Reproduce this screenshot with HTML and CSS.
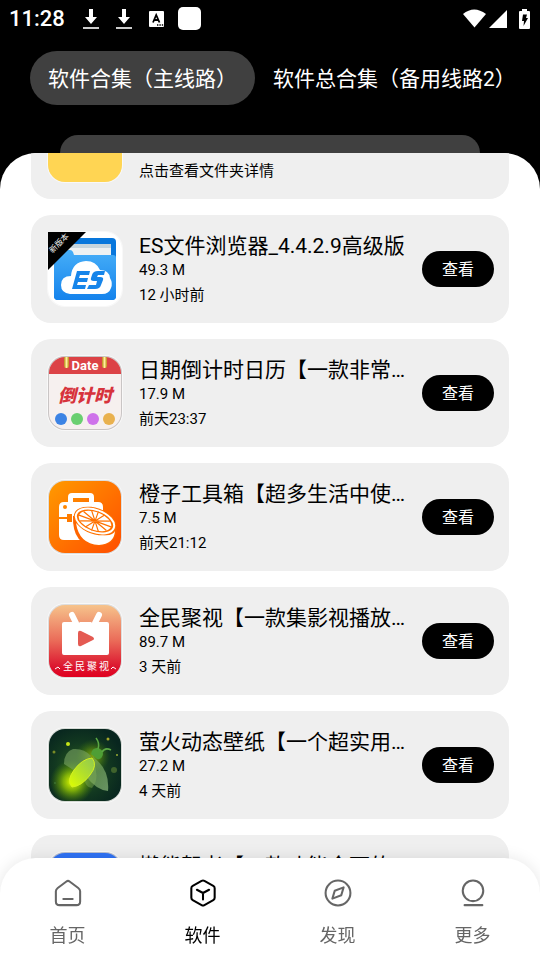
FILE: index.html
```html
<!DOCTYPE html>
<html lang="zh-CN">
<head>
<meta charset="utf-8">
<meta name="viewport" content="width=device-width, initial-scale=1">
<title>软件</title>
<link rel="stylesheet" href="styles.css">
</head>
<body>
<header class="header">
  <div class="status">
    <span class="clock">11:28</span>
    <svg class="st-download" width="16" height="22" viewBox="0 0 16 22"><path d="M6 1h4v8h4l-6 7-6-7h4z" fill="#fff"/><path d="M0 19h16v2H0z" fill="#ccc"/></svg>
    <svg class="st-download" width="16" height="22" viewBox="0 0 16 22"><path d="M6 1h4v8h4l-6 7-6-7h4z" fill="#fff"/><path d="M0 19h16v2H0z" fill="#ccc"/></svg>
    <svg class="st-input" width="15" height="16" viewBox="0 0 15 16"><rect width="15" height="16" rx="1" fill="#fff"/><path d="M4 11.500 7.200 4l3.300 7.500M5.200 9h4" fill="none" stroke="#000" stroke-width="1.800"/><path d="M8 13.300h1.400v1.400H8zM10.400 13.300h1.400v1.400h-1.400zM12.800 13.300h1.400v1.400h-1.400z"/></svg>
    <span class="st-square"></span>
    <svg class="st-wifi" width="23" height="19" viewBox="0 0 23 19"><path d="M0 5Q11-4 23 5L11.500 18.500z" fill="#fff"/></svg>
    <svg class="st-signal" width="18" height="18" viewBox="0 0 18 18"><path d="M18 0v18H0z" fill="#fff"/></svg>
    <svg class="st-battery" width="11" height="20" viewBox="0 0 11 20"><path d="M3 0h5v2h2q1 0 1 1v16q0 1-1 1H1q-1 0-1-1V3q0-1 1-1h2z" fill="#fff"/><path d="M4 5.500h4L7 9h2l-4.500 8 .5-5H3z"/></svg>
  </div>
  <div class="tabs">
    <button class="tab tab-active" type="button">软件合集（主线路）</button>
    <button class="tab" type="button">软件总合集（备用线路2）</button>
  </div>
  <div class="banner"></div>
</header>

<main class="panel">
  <ul class="list">
    <li class="card">
      <svg class="icon" viewBox="0 0 74 74"><rect width="74" height="74" rx="17" fill="#ffd553"/></svg>
      <div class="info">
        <h2 class="title"></h2>
        <p class="size"></p>
        <p class="time">点击查看文件夹详情</p>
      </div>
    </li>

    <li class="card">
      <svg class="icon" viewBox="0 0 74 74">
        <defs>
          <linearGradient id="es-a" x1="0" y1="0" x2="0" y2="1"><stop offset="0" stop-color="#46aef8"/><stop offset="1" stop-color="#1583ec"/></linearGradient>
        </defs>
        <rect width="74" height="74" rx="17" fill="#fff"/>
        <rect x="6" y="6" width="62" height="62" rx="4" fill="#0877dc"/>
        <path d="M18 12h45v13H18z" fill="#c7d5dd"/>
        <path d="M16 16h47v10H16z" fill="#eef1f2"/>
        <path d="M6 18h16q2 0 3 2l1 3h39q3 0 3 3v38q0 4-4 4H10q-4 0-4-4z" fill="url(#es-a)"/>
        <path d="M22 62q-9-1-9-9 0-9 10-9 1-14 15-15 10 0 14 9 9 0 10 8 3 5 1 10-2 6-9 6z" fill="#fff"/>
        <path d="M29 39h13l-1 4h-9l-1 3h9l-1 4h-9l-1 3h9l-1 4H24zM54 39h-4q-5 0-6 4l-1 3q-1 3 3 3h3l-1 4h-7l-2 4h8q5 0 6-4l2-5q1-3-3-3h-3l1-2h6l1-4z" fill="#1685ea"/>
        <path d="M0 0h38L0 38z" fill="#000"/>
        <text class="ribbon-text" x="13" y="13" transform="rotate(-45 13 13)">新版本</text>
      </svg>
      <div class="info">
        <h2 class="title">ES文件浏览器_4.4.2.9高级版</h2>
        <p class="size">49.3 M</p>
        <p class="time">12 小时前</p>
      </div>
      <button class="view" type="button">查看</button>
    </li>

    <li class="card">
      <svg class="icon" viewBox="0 0 74 74">
        <defs>
          <clipPath id="date-c"><rect x="1" y="1" width="72" height="72" rx="16"/></clipPath>
          <linearGradient id="date-g"><stop offset="0" stop-color="#b88715"/><stop offset=".5" stop-color="#fff09a"/><stop offset="1" stop-color="#bc8914"/></linearGradient>
        </defs>
        <rect width="74" height="74" rx="17" fill="#c9c5c5"/>
        <g clip-path="url(#date-c)">
          <path d="M0 0h74v74H0z" fill="#f6f0ef"/>
          <path d="M0 0h74v18H0z" fill="#dc4246"/>
          <rect x="16" y="0" width="5" height="12" rx="2" fill="url(#date-g)"/>
          <rect x="54" y="0" width="5" height="12" rx="2" fill="url(#date-g)"/>
          <text class="date-text" x="37" y="14">Date</text>
          <text class="countdown-text" x="37" y="46">倒计时</text>
          <circle cx="13" cy="63" r="6" fill="#3d83e4"/><circle cx="29" cy="63" r="6" fill="#6acf70"/><circle cx="45" cy="63" r="6" fill="#cf72ea"/><circle cx="61" cy="63" r="6" fill="#e9b14f"/>
        </g>
      </svg>
      <div class="info">
        <h2 class="title">日期倒计时日历【一款非常…</h2>
        <p class="size">17.9 M</p>
        <p class="time">前天23:37</p>
      </div>
      <button class="view" type="button">查看</button>
    </li>

    <li class="card">
      <svg class="icon" viewBox="0 0 74 74">
        <defs><linearGradient id="or-g" x1="0" y1="0" x2="1" y2="1"><stop offset="0" stop-color="#ff9a00"/><stop offset="1" stop-color="#ff4d00"/></linearGradient></defs>
        <rect width="74" height="74" rx="17" fill="#ddd"/>
        <rect x="1" y="1" width="72" height="72" rx="16" fill="url(#or-g)"/>
        <path d="M20 23v-6q0-4 4-4h18q4 0 4 4v6h-5v-5H25v5z" fill="#fff"/>
        <path d="M16 22h34q5 0 5 5v10L32 60H16q-5 0-5-5V39h8v3h5v-8h-5v3h-8V27q0-5 5-5z" fill="#fff"/>
        <circle cx="17" cy="27" r="2" fill="#ff8600"/>
        <path d="M25 36q-1 30 24 30 19 0 20-17L57 33z" fill="#ff6500"/>
        <path d="M28 43q3 21 23 22 15-1 16-14-2 5-12 4-16-1-27-12z" fill="#fff"/>
        <g transform="rotate(20 47 41)">
          <ellipse cx="47" cy="41" rx="22" ry="13" fill="#ff7200"/>
          <ellipse cx="47" cy="41" rx="20" ry="11" fill="none" stroke="#fff" stroke-width="2"/>
          <ellipse cx="47" cy="41" rx="17" ry="9" fill="#fff"/>
          <path d="M30 41h34M47 31v20M33 36l28 10M33 46l28-10M40 32l14 18M54 32 40 50" stroke="#ff7200" stroke-width="1.200"/>
        </g>
      </svg>
      <div class="info">
        <h2 class="title">橙子工具箱【超多生活中使…</h2>
        <p class="size">7.5 M</p>
        <p class="time">前天21:12</p>
      </div>
      <button class="view" type="button">查看</button>
    </li>

    <li class="card">
      <svg class="icon" viewBox="0 0 74 74">
        <defs><linearGradient id="tv-g" x1="0" y1="0" x2="0" y2="1"><stop offset="0" stop-color="#f6c38b"/><stop offset=".5" stop-color="#ea6a58"/><stop offset=".85" stop-color="#dc1730"/><stop offset="1" stop-color="#e10020"/></linearGradient></defs>
        <rect width="74" height="74" rx="17" fill="#ddd"/>
        <rect x="1" y="1" width="72" height="72" rx="16" fill="url(#tv-g)"/>
        <path d="m24 11 4 8M51 11l-4 8" stroke="#fff" stroke-width="6" stroke-linecap="round"/>
        <path d="M16 18h10q2 4 6 0h11q4 4 6 0h10q2 0 2 2v29q0 2-2 2H16q-2 0-2-2V20q0-2 2-2z" fill="#fff"/>
        <path d="M30 29q0-3 3-2l12 6q2 2 0 3l-12 6q-3 1-3-2z" fill="#e45a52"/>
        <g class="tv-text"><text x="20" y="66">全</text><text x="32" y="66">民</text><text x="44" y="66">聚</text><text x="56" y="66">视</text></g>
        <path d="m7 65 3-2 2 2M63 65l2-2 3 2" stroke="#fff" fill="none"/>
      </svg>
      <div class="info">
        <h2 class="title">全民聚视【一款集影视播放…</h2>
        <p class="size">89.7 M</p>
        <p class="time">3 天前</p>
      </div>
      <button class="view" type="button">查看</button>
    </li>

    <li class="card">
      <svg class="icon" viewBox="0 0 74 74">
        <defs>
          <radialGradient id="ff-bg" cx=".45" cy=".55" r=".6"><stop offset="0" stop-color="#2d641c"/><stop offset=".6" stop-color="#123820"/><stop offset="1" stop-color="#08261f"/></radialGradient>
          <radialGradient id="ff-glow"><stop offset="0" stop-color="#e6ff00"/><stop offset=".4" stop-color="#a8da00" stop-opacity=".7"/><stop offset="1" stop-color="#4d9500" stop-opacity="0"/></radialGradient>
          <linearGradient id="ff-body" x1="1" y1="0" x2="0" y2="1"><stop offset="0" stop-color="#8fc855"/><stop offset=".5" stop-color="#b3e02a"/><stop offset="1" stop-color="#dfff00"/></linearGradient>
          <linearGradient id="ff-wing" x1="0" y1="0" x2="1" y2="1"><stop offset="0" stop-color="#7fae5c" stop-opacity=".5"/><stop offset="1" stop-color="#8fbd80" stop-opacity=".7"/></linearGradient>
          <clipPath id="ff-c"><rect x="1" y="1" width="72" height="72" rx="16"/></clipPath>
        </defs>
        <rect width="74" height="74" rx="17" fill="#d5d9d5"/>
        <g clip-path="url(#ff-c)">
          <path d="M0 0h74v74H0z" fill="url(#ff-bg)"/>
          <circle cx="24" cy="54" r="22" fill="url(#ff-glow)"/>
          <circle cx="45" cy="28" r="17" fill="url(#ff-glow)" opacity=".5"/>
          <path d="M43 28Q36 20 25 21q-9 3-9 15l14 9z" fill="#7ba564" opacity=".6"/>
          <path d="M45 29q17 12 15 34-12-1-23-16z" fill="url(#ff-wing)"/>
          <path d="M44 30q9 20 0 30-7 0-8-11z" fill="#86b25a" opacity=".4"/>
          <path d="M44 30q6 7-2 17-8 11-18 12-6-6 2-17 8-11 18-12z" fill="url(#ff-body)" stroke="#d4f020"/>
          <path d="M43 26q1-6 6-6 6 1 6 6-1 6-6 5z" fill="#4e9e35"/>
          <path d="M50 21q2-6-2-11M54 24q3-5 9-2" fill="none" stroke="#5ba843" stroke-width="1.500"/>
          <circle cx="20" cy="16" r="2" fill="#c6e517"/><circle cx="60" cy="11" r="1.500" fill="#a6a82b"/><circle cx="6" cy="24" r="1.500" fill="#788b25"/><circle cx="66" cy="42" r="3" fill="#547832" opacity=".7"/><circle cx="69" cy="27" r="1" fill="#99ac35"/><circle cx="7" cy="55" r="1" fill="#3d7030"/>
        </g>
      </svg>
      <div class="info">
        <h2 class="title">萤火动态壁纸【一个超实用…</h2>
        <p class="size">27.2 M</p>
        <p class="time">4 天前</p>
      </div>
      <button class="view" type="button">查看</button>
    </li>

    <li class="card">
      <svg class="icon" viewBox="0 0 74 74"><rect width="74" height="74" rx="17" fill="#b8bfd0"/><rect x="1" y="1" width="72" height="72" rx="16" fill="#2f72f5"/></svg>
      <div class="info">
        <h2 class="title">懒熊驾考【一款功能全面的…</h2>
      </div>
    </li>
  </ul>
</main>

<nav class="nav">
  <a class="nav-item" href="#home">
    <svg class="nav-icon" viewBox="0 0 30 30"><path d="M13.300 2.700Q15 1.400 16.700 2.700l9.300 7q2 1.500 2 3.500V24q0 4-4 4H6q-4 0-4-4V13.200q0-2 2-3.500zM10 21.500h10"/></svg>
    <span>首页</span>
  </a>
  <a class="nav-item nav-active" href="#apps" aria-current="page">
    <svg class="nav-icon" viewBox="0 0 30 30"><path d="M13.500 2q1.500-.8 3 0l9.500 5.300q1.500.8 1.500 2.500v10.400q0 1.700-1.500 2.500L16.500 28q-1.500.8-3 0L4 22.700q-1.500-.8-1.500-2.500V9.800Q2.500 8.100 4 7.300zM8.500 11.500 15 15l6.500-3.500M15 15v7"/></svg>
    <span>软件</span>
  </a>
  <a class="nav-item" href="#discover">
    <svg class="nav-icon" viewBox="0 0 30 30"><circle cx="15" cy="15" r="13.300"/><path d="m21 9-2.500 8.500L9 21l2.500-8.500z"/></svg>
    <span>发现</span>
  </a>
  <a class="nav-item" href="#more">
    <svg class="nav-icon" viewBox="0 0 30 30"><circle cx="15" cy="12.700" r="11"/><path d="M6 28h19"/></svg>
    <span>更多</span>
  </a>
</nav>
</body>
</html>
```
FILE: styles.css
```css
* { box-sizing: border-box; }

body {
  margin: 0;
  height: 100vh;
  display: flex;
  flex-direction: column;
  overflow: hidden;
  background: #000;
  color: #000;
  font-family: Roboto, "Noto Sans CJK SC", sans-serif;
}

button {
  border: 0;
  padding: 0;
  font-family: inherit;
  white-space: nowrap;
}

h2, p, ul { margin: 0; padding: 0; }

.header { flex: none; }

.status {
  display: flex;
  align-items: center;
  height: 37px;
  padding: 0 10px 0 9px;
  color: #fff;
}

.clock {
  font-size: 22px;
  font-weight: 500;
  margin-right: 18px;
}

.st-download { margin-right: 17px; }
.st-input { margin-right: 14px; }

.st-square {
  width: 23px;
  height: 23px;
  border-radius: 5px;
  background: #fff;
}

.st-wifi { margin-left: auto; }
.st-signal { margin: 0 12px 0 3px; }

.tabs {
  display: flex;
  padding: 14px 0 30px 30px;
  overflow: hidden;
}

.tab {
  flex: none;
  height: 54px;
  padding: 0 18px 2px;
  border-radius: 27px;
  background: transparent;
  color: #fff;
  font-size: 21px;
}

.tab-active { background: #404040; }

.banner {
  height: 18px;
  margin: 0 60px;
  border-radius: 18px 18px 0 0;
  background: #404040;
}

.panel {
  flex: 1;
  min-height: 0;
  overflow: hidden;
  border-radius: 36px 36px 0 0;
  background: #fff;
}

/* The list is scrolled part of the way into its first card. */
.list {
  display: flex;
  flex-direction: column;
  gap: 16px;
  margin-top: -62px;
  padding: 0 31px;
  list-style: none;
}

.card {
  display: flex;
  align-items: center;
  gap: 16px;
  height: 108px;
  padding: 0 15px 0 17px;
  border-radius: 20px;
  background: #efefef;
}

.icon {
  flex: none;
  width: 74px;
  height: 74px;
  overflow: visible;
  border-radius: 17px;
  box-shadow: 0 0 0 1px #f8f8f8;
}

.info {
  flex: 1;
  min-width: 0;
  height: 74px;
  padding-left: 1px;
  white-space: nowrap;
}

.title {
  height: 28px;
  font-size: 21px;
  line-height: 28px;
  font-weight: 400;
}

.size {
  height: 20px;
  font-size: 15px;
  line-height: 20px;
}

.time {
  margin-top: 4px;
  font-size: 15px;
  line-height: 22px;
}

.view {
  flex: none;
  width: 72px;
  height: 36px;
  padding-bottom: 2px;
  border-radius: 18px;
  background: #000;
  color: #fff;
  font-size: 16px;
}

.ribbon-text {
  fill: #fff;
  font-size: 8px;
  text-anchor: middle;
}

.date-text {
  fill: #fff;
  font-size: 13px;
  font-weight: 700;
  text-anchor: middle;
}

.countdown-text {
  fill: #d7333c;
  font-size: 18px;
  font-weight: 900;
  font-style: italic;
  text-anchor: middle;
}

.tv-text {
  fill: #fff;
  font-size: 10px;
  text-anchor: middle;
}

.nav {
  position: fixed;
  left: 0;
  right: 0;
  bottom: 0;
  display: flex;
  height: 102px;
  border-radius: 36px 36px 0 0;
  background: #fff;
  box-shadow: 0 0 16px rgba(0, 0, 0, 0.1);
}

.nav-item {
  flex: 1;
  display: flex;
  flex-direction: column;
  align-items: center;
  gap: 15px;
  padding-top: 21px;
  color: #666;
  font-size: 18px;
  line-height: 28px;
  text-decoration: none;
}

.nav-active { color: #000; }

.nav-icon {
  width: 28px;
  height: 28px;
  fill: none;
  stroke: currentColor;
  stroke-width: 2.2;
  stroke-linecap: round;
  stroke-linejoin: round;
}
```
